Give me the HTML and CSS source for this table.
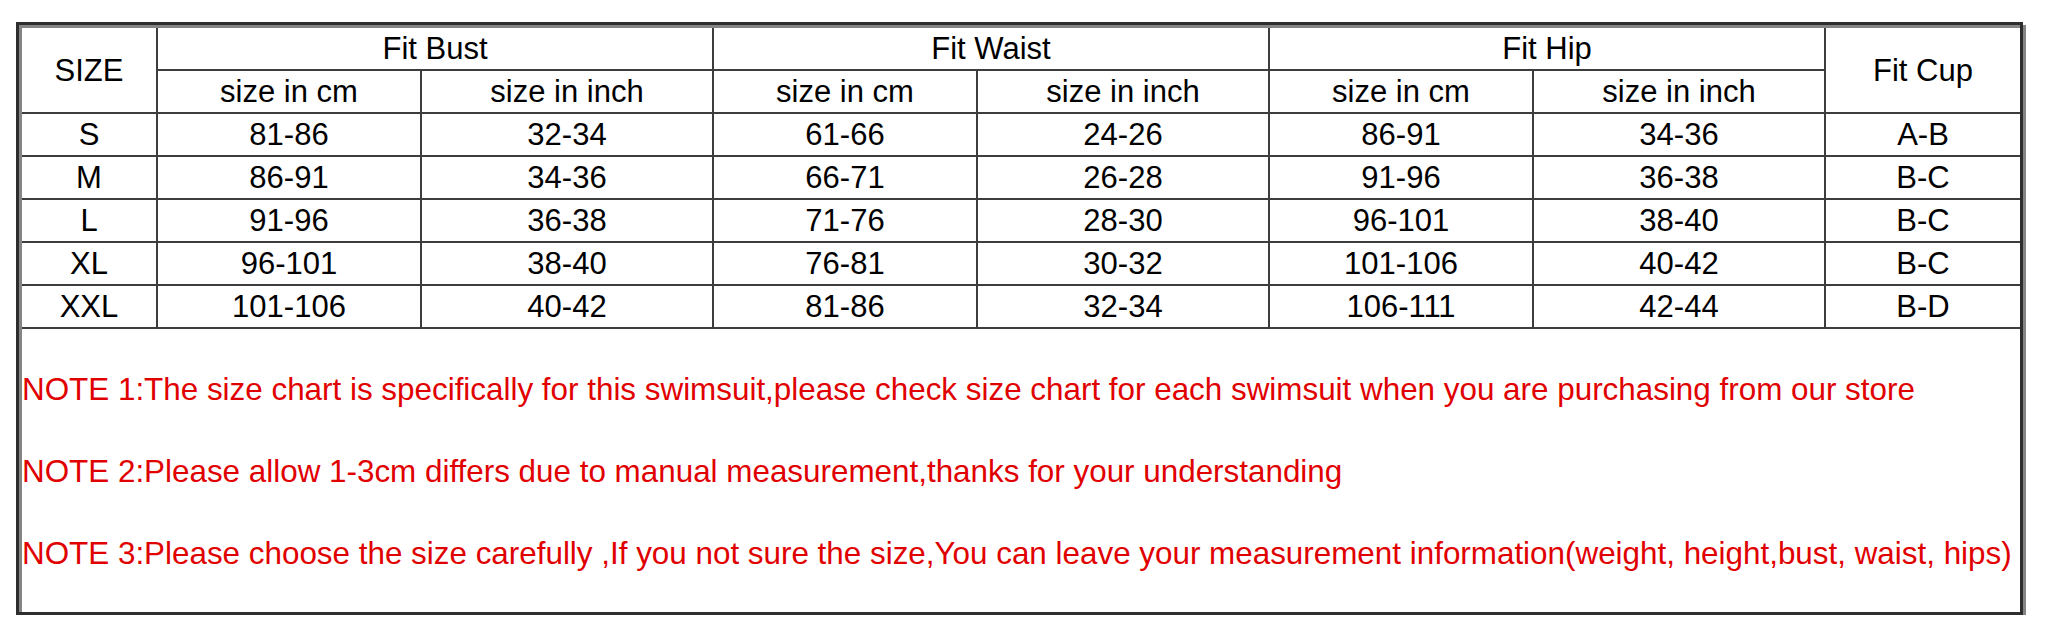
FILE: index.html
```html
<!DOCTYPE html>
<html>
<head>
<meta charset="utf-8">
<link rel="stylesheet" href="styles.css">
</head>
<body>
<div class="frame">
  <table class="chart">
    <colgroup>
      <col class="c-size">
      <col class="c-cm"><col class="c-in">
      <col class="c-cm"><col class="c-in">
      <col class="c-cm"><col class="c-in">
      <col class="c-cup">
    </colgroup>
    <thead>
      <tr class="r1">
        <th rowspan="2" class="first">SIZE</th>
        <th colspan="2">Fit Bust</th>
        <th colspan="2">Fit Waist</th>
        <th colspan="2">Fit Hip</th>
        <th rowspan="2" class="last">Fit Cup</th>
      </tr>
      <tr class="r2">
        <th>size in cm</th><th>size in inch</th>
        <th>size in cm</th><th>size in inch</th>
        <th>size in cm</th><th>size in inch</th>
      </tr>
    </thead>
    <tbody>
      <tr><td class="first">S</td><td>81-86</td><td>32-34</td><td>61-66</td><td>24-26</td><td>86-91</td><td>34-36</td><td class="last">A-B</td></tr>
      <tr><td class="first">M</td><td>86-91</td><td>34-36</td><td>66-71</td><td>26-28</td><td>91-96</td><td>36-38</td><td class="last">B-C</td></tr>
      <tr><td class="first">L</td><td>91-96</td><td>36-38</td><td>71-76</td><td>28-30</td><td>96-101</td><td>38-40</td><td class="last">B-C</td></tr>
      <tr><td class="first">XL</td><td>96-101</td><td>38-40</td><td>76-81</td><td>30-32</td><td>101-106</td><td>40-42</td><td class="last">B-C</td></tr>
      <tr><td class="first">XXL</td><td>101-106</td><td>40-42</td><td>81-86</td><td>32-34</td><td>106-111</td><td>42-44</td><td class="last">B-D</td></tr>
    </tbody>
  </table>
  <div class="notes">
    <p class="note">NOTE 1:The size chart is specifically for this swimsuit,please check size chart for each swimsuit when you are purchasing from our store</p>
    <p class="note">NOTE 2:Please allow 1-3cm differs due to manual measurement,thanks for your understanding</p>
    <p class="note">NOTE 3:Please choose the size carefully ,If you not sure the size,You can leave your measurement information(weight, height,bust, waist, hips)</p>
  </div>
</div>
</body>
</html>
```

FILE: styles.css
```css
html, body {
  margin: 0;
  padding: 0;
  background: #ffffff;
}

body {
  padding: 22px 0 0 16px;
  font-family: "Liberation Sans", Arial, sans-serif;
}

.frame {
  box-sizing: border-box;
  width: 2007px;
  height: 593px;
  border: 3px solid #2e2e2e;
  box-shadow: inset 3px 3px 0 #858585, 3px 3px 0 #858585;
  padding: 3px 0 0 3px;
  overflow: hidden;
}

.chart {
  border-collapse: collapse;
  table-layout: fixed;
  width: 1998px;
  color: #000;
  font-size: 31px;
}

.c-size { width: 135px; }
.c-cm { width: 264px; }
.c-in { width: 292px; }
.c-cup { width: 195px; }

.chart th,
.chart td {
  border: 2px solid #3d3d3d;
  padding: 0;
  text-align: center;
  vertical-align: middle;
  font-weight: normal;
  line-height: 1;
  white-space: nowrap;
}

.chart thead tr.r1 th { border-top: none; height: 41px; }
.chart thead tr.r2 th { height: 41px; }
.chart tbody td { height: 41px; }

.chart .first { border-left: none; }
.chart .last { border-right: none; }

.notes {
  padding-top: 20px;
}

.note {
  margin: 0;
  color: #e10000;
  font-size: 31.4px;
  line-height: 82px;
  white-space: nowrap;
  padding-left: 0;
}
```
